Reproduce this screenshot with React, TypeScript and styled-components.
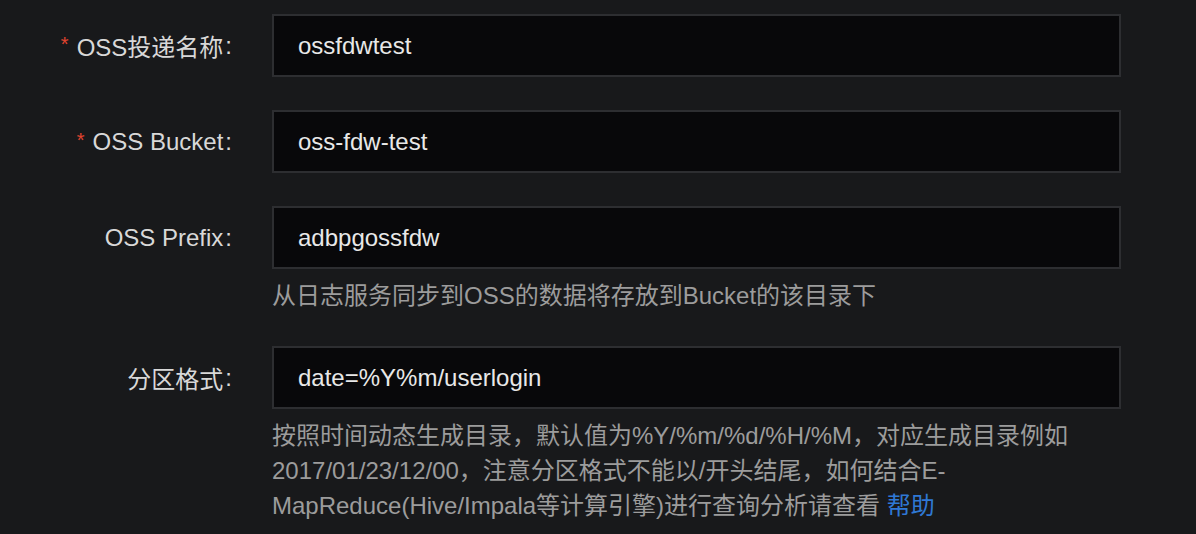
import React from 'react';
import styled, { createGlobalStyle } from 'styled-components';

const GlobalStyle = createGlobalStyle`
  html, body {
    margin: 0;
    padding: 0;
    background: #18191b;
  }
  body {
    font-family: "Liberation Sans", "Noto Sans CJK SC", Arial, sans-serif;
  }
`;

const Form = styled.form`
  width: 1196px;
  height: 534px;
  box-sizing: border-box;
  padding-top: 14px;
  overflow: hidden;
`;

const Row = styled.div`
  display: grid;
  grid-template-columns: 232px 849px;
  column-gap: 40px;
  margin-bottom: 33px;
`;

const Label = styled.label`
  height: 63px;
  display: flex;
  align-items: center;
  justify-content: flex-end;
  font-size: 24px;
  color: #d8d8d8;
  white-space: nowrap;
`;

const Star = styled.span`
  color: #e0442f;
  font-size: 20px;
  margin-right: 8px;
  position: relative;
  top: -1px;
`;

const Colon = styled.span`
  margin-left: 2px;
`;

const Field = styled.div`
  display: flex;
  flex-direction: column;
`;

const Input = styled.input`
  box-sizing: border-box;
  width: 100%;
  height: 63px;
  padding: 0 24px;
  background: #08080a;
  border: 2px solid #2d2e31;
  border-radius: 0;
  outline: none;
  font-family: inherit;
  font-size: 24px;
  color: #e8e8e8;
`;

const Help = styled.div`
  margin-top: 9px;
  font-size: 24px;
  line-height: 35px;
  color: #9c9c9c;
`;

const HelpLink = styled.a`
  color: #2f78d4;
  text-decoration: none;
`;

type FieldDef = {
  label: string;
  value: string;
  required?: boolean;
  help?: React.ReactNode;
};

const fields: FieldDef[] = [
  { label: 'OSS投递名称', value: 'ossfdwtest', required: true },
  { label: 'OSS Bucket', value: 'oss-fdw-test', required: true },
  {
    label: 'OSS Prefix',
    value: 'adbpgossfdw',
    help: '从日志服务同步到OSS的数据将存放到Bucket的该目录下',
  },
  {
    label: '分区格式',
    value: 'date=%Y%m/userlogin',
    help: (
      <>
        按照时间动态生成目录，默认值为%Y/%m/%d/%H/%M，对应生成目录例如
        <br />
        2017/01/23/12/00，注意分区格式不能以/开头结尾，如何结合E-
        <br />
        MapReduce(Hive/Impala等计算引擎)进行查询分析请查看 <HelpLink href="#">帮助</HelpLink>
      </>
    ),
  },
];

export default function App() {
  return (
    <>
      <GlobalStyle />
      <Form onSubmit={(e) => e.preventDefault()}>
        {fields.map((f) => (
          <Row key={f.label}>
            <Label>
              {f.required && <Star>*</Star>}
              {f.label}
              <Colon>:</Colon>
            </Label>
            <Field>
              <Input defaultValue={f.value} />
              {f.help && <Help>{f.help}</Help>}
            </Field>
          </Row>
        ))}
      </Form>
    </>
  );
}
